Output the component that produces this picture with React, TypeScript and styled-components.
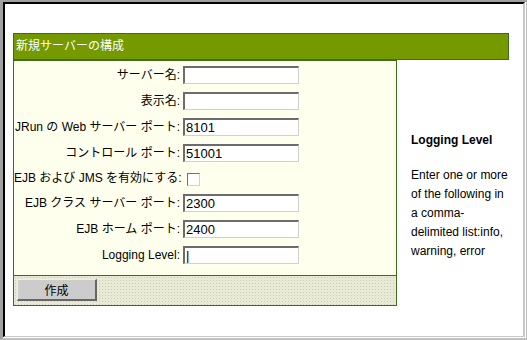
import React, { FC } from "react";
import styled, { createGlobalStyle } from "styled-components";

const GlobalStyle = createGlobalStyle`
  html, body { margin: 0; padding: 0; background: #ffffff; }
  body { font-family: "Liberation Sans", "Noto Sans CJK JP", sans-serif; font-size: 12px; }
`;

const Frame = styled.div`
  width: 527px;
  height: 340px;
  box-sizing: border-box;
  border-top: 2px solid #a0a0a0;
  border-left: 3px solid #a0a0a0;
  border-right: 1px solid #c0c0c0;
  border-bottom: 2px solid #c0c0c0;
  padding: 0 1px 1px 0;
  background: #ffffff;
`;

const Inner = styled.div`
  height: 100%;
  box-sizing: border-box;
  border-top: 2px solid #000000;
  border-left: 2px solid #000000;
  border-right: 2px solid #c8c8c8;
  border-bottom: 1px solid #c8c8c8;
  padding: 29px 14px 0 8px;
`;

const Header = styled.div`
  height: 25px;
  background: #749a00;
  border: 1px solid #3f6b1c;
  color: #ffffff;
  font-size: 12px;
  line-height: 25px;
  padding-left: 2px;
`;

const Body = styled.div`
  display: flex;
`;

const Panel = styled.div`
  width: 384px;
  box-sizing: border-box;
  border: 1px solid #3f6b1c;
  background: #ffffee;
`;

const Fields = styled.div`
  display: grid;
  grid-template-columns: 166px 1fr;
  column-gap: 3px;
  row-gap: 8px;
  padding: 5px 0 11px 0;
`;

const Label = styled.label<{ $short?: boolean }>`
  text-align: right;
  color: #000000;
  font-size: 12px;
  line-height: ${(p) => (p.$short ? "16px" : "18px")};
  white-space: nowrap;
`;

const TextInput = styled.input`
  width: 116px;
  height: 18px;
  box-sizing: border-box;
  margin: 0;
  padding: 0 1px;
  border-style: solid;
  border-width: 2px 1px 1px 2px;
  border-color: #6c6c6c #d0d0d0 #d0d0d0 #6c6c6c;
  background: #ffffff;
  font-family: "Liberation Sans", sans-serif;
  font-size: 13px;
  color: #000000;
  outline: none;
`;

const CheckRow = styled.div`
  height: 16px;
`;

const Check = styled.span`
  display: block;
  width: 13px;
  height: 13px;
  box-sizing: border-box;
  margin: 3px 0 0 4px;
  border-style: solid;
  border-width: 1px;
  border-color: #707070 #d0d0d0 #d0d0d0 #707070;
  background: #ffffff;
`;

const Footer = styled.div`
  border-top: 1px solid #3f6b1c;
  height: 30px;
  box-sizing: border-box;
  padding: 3px 0 0 3px;
  background-color: #e9ead6;
  background-image: radial-gradient(#c9ccb6 0.7px, transparent 0.8px);
  background-size: 3px 3px;
`;

const Button = styled.button`
  width: 80px;
  height: 22px;
  box-sizing: border-box;
  margin: 0;
  padding: 0;
  background: #cccccc;
  border-style: solid;
  border-width: 1px 2px 2px 1px;
  border-color: #eeeeee #666666 #666666 #eeeeee;
  font-family: "Noto Sans CJK JP", sans-serif;
  font-size: 12px;
  color: #000000;
`;

const Aside = styled.div`
  flex: 1;
  padding: 73px 0 0 14px;
  color: #000000;
  font-size: 12px;
`;

const AsideTitle = styled.div`
  font-weight: bold;
  line-height: 15px;
  margin-bottom: 18px;
`;

const AsideText = styled.div`
  line-height: 19px;
`;

const fields: { label: string; value?: string; check?: boolean; caret?: boolean }[] = [
  { label: "サーバー名:" },
  { label: "表示名:" },
  { label: "JRun の Web サーバー ポート:", value: "8101" },
  { label: "コントロール ポート:", value: "51001" },
  { label: "EJB および JMS を有効にする:", check: true },
  { label: "EJB クラス サーバー ポート:", value: "2300" },
  { label: "EJB ホーム ポート:", value: "2400" },
  { label: "Logging Level:", caret: true },
];

const App: FC = () => {
  return (
    <>
      <GlobalStyle />
      <Frame>
        <Inner>
          <Header>新規サーバーの構成</Header>
          <Body>
            <Panel>
              <Fields>
                {fields.map((f) => (
                  <React.Fragment key={f.label}>
                    <Label $short={f.check}>{f.label}</Label>
                    {f.check ? (
                      <CheckRow>
                        <Check />
                      </CheckRow>
                    ) : (
                      <TextInput defaultValue={f.value ?? (f.caret ? "|" : "")} readOnly />
                    )}
                  </React.Fragment>
                ))}
              </Fields>
              <Footer>
                <Button>作成</Button>
              </Footer>
            </Panel>
            <Aside>
              <AsideTitle>Logging Level</AsideTitle>
              <AsideText>
                Enter one or more
                <br />
                of the following in
                <br />
                a comma-
                <br />
                delimited list:info,
                <br />
                warning, error
              </AsideText>
            </Aside>
          </Body>
        </Inner>
      </Frame>
    </>
  );
};

export default App;
